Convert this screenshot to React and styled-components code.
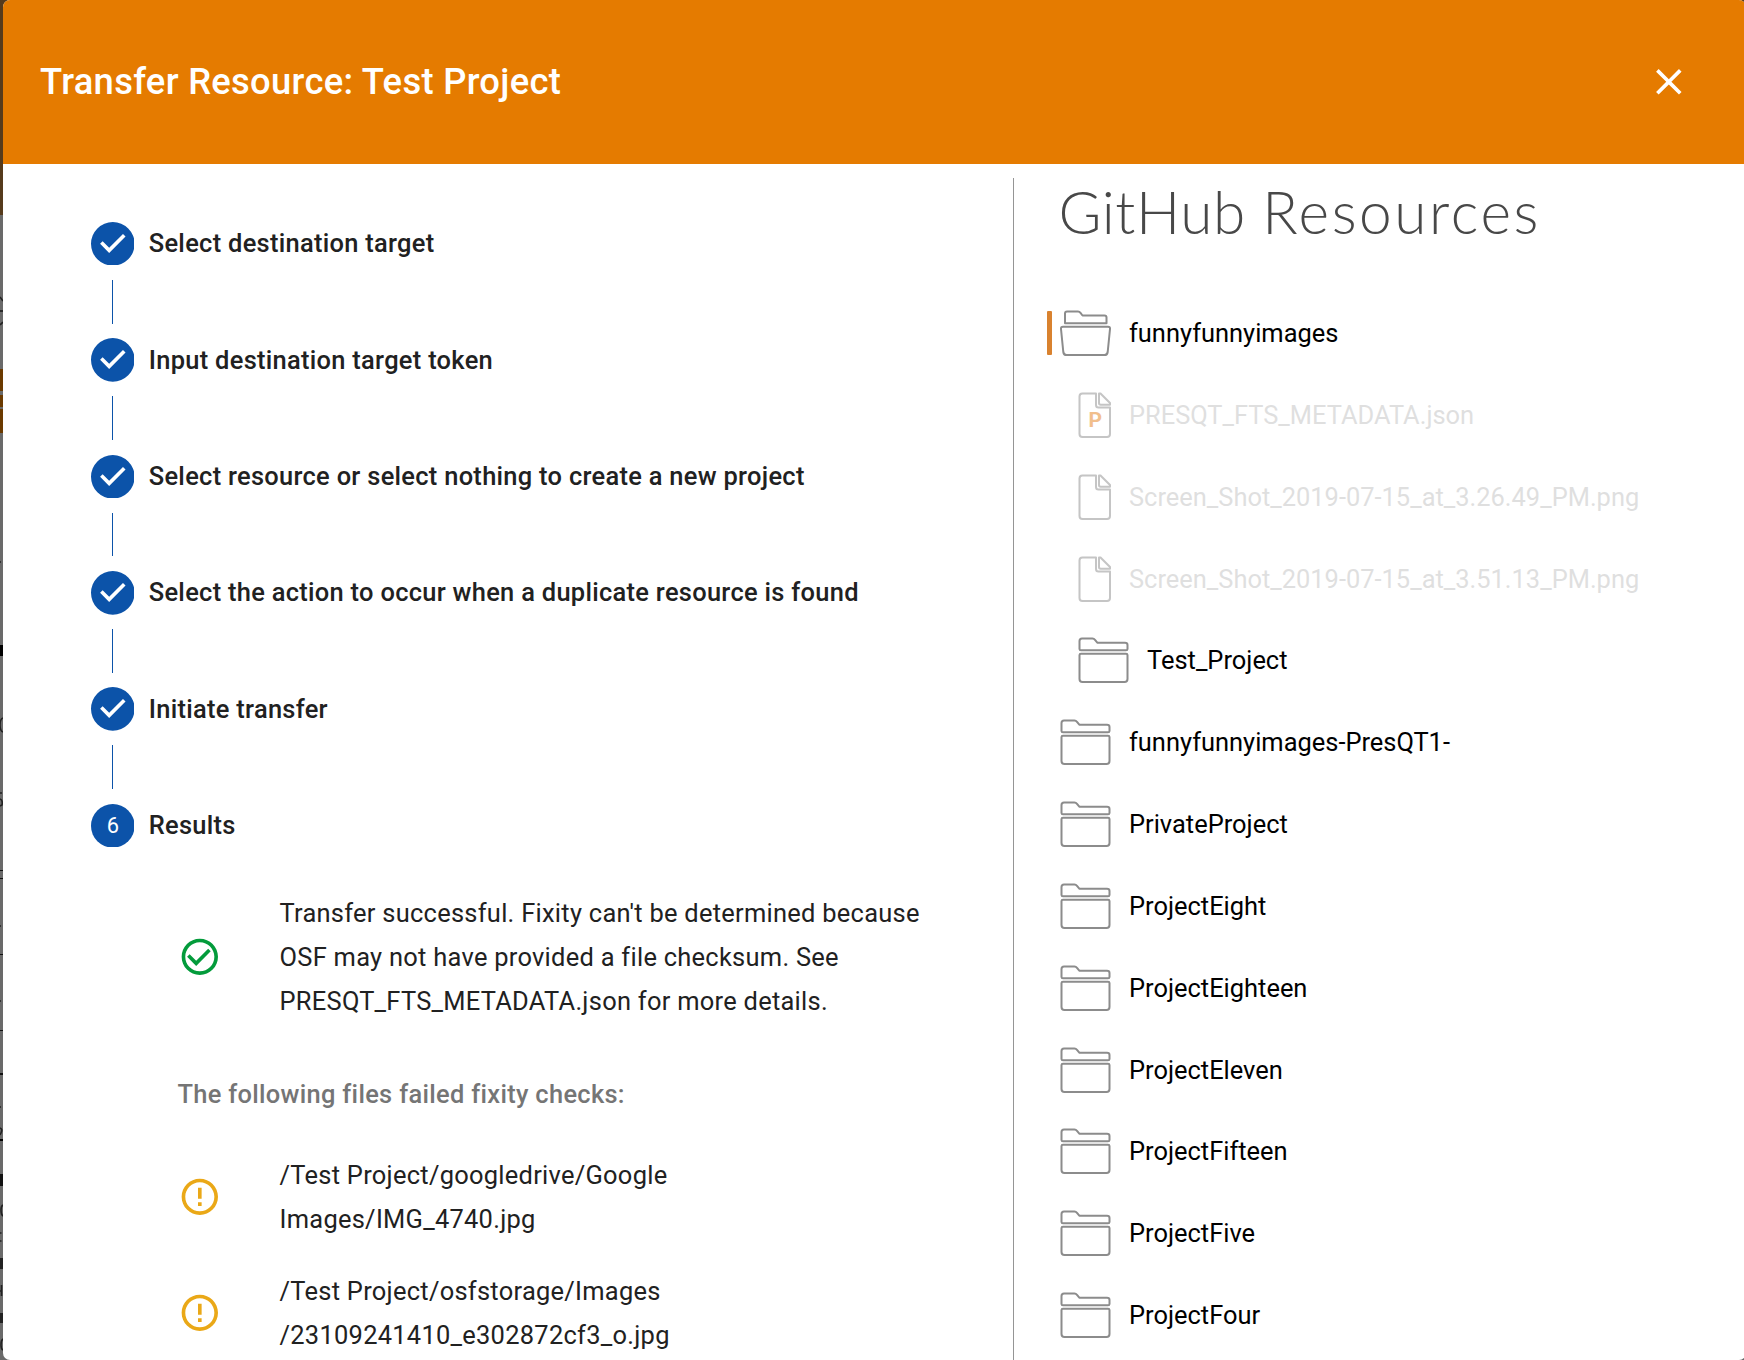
import React from "react";
import styled, { createGlobalStyle } from "styled-components";

const Global = createGlobalStyle`
  * { box-sizing: border-box; }
  html, body, #root { height: 100%; }
  body {
    margin: 0;
    overflow: hidden;
    background: #fff;
    font-family: Roboto, "Liberation Sans", sans-serif;
    -webkit-font-smoothing: antialiased;
  }
`;

const Screen = styled.div`
  display: flex;
  width: 1744px;
  height: 1360px;
  overflow: hidden;
  background: linear-gradient(#563b1c 0 215px, #6a6a6a 215px, #6a6a6a);
`;

const Backdrop = styled.svg`
  flex: none;
  width: 3px;
  height: 1360px;
  display: block;
`;

const Dialog = styled.div`
  flex: none;
  width: 1743px;
  height: 1360px;
  display: flex;
  flex-direction: column;
  border-radius: 7px;
  background: #fff;
  overflow: hidden;
`;

const Header = styled.header`
  flex: none;
  height: 164px;
  display: flex;
  align-items: center;
  justify-content: space-between;
  padding: 0 55.5px 0 37px;
  background: #e57b00;
  color: #fff;
`;

const Title = styled.h1`
  margin: 0;
  font-size: 36.36px;
  line-height: 58px;
  font-weight: 500;
  letter-spacing: 0.0083em;
`;

const CloseButton = styled.button`
  border: 0;
  padding: 0;
  background: none;
  color: #fff;
  display: flex;
`;

const Icon = styled.svg`
  flex: none;
  display: block;
  width: 43.64px;
  height: 43.64px;
  fill: ${(p) => p.$color || "currentColor"};
`;

const Content = styled.div`
  flex: 1;
  min-height: 0;
  display: flex;
`;

const StepperPane = styled.section`
  flex: none;
  width: 1010px;
  padding: 57.85px 0 0 87.6px;
`;

const Step = styled.div`
  display: flex;
  align-items: center;
  gap: 14.55px;
  height: 43.64px;
`;

const StepLabel = styled.span`
  font-size: 25.45px;
  line-height: 36.4px;
  font-weight: 500;
  letter-spacing: 0.0114em;
  color: #212121;
  white-space: nowrap;
`;

const Connector = styled.div`
  width: 1px;
  height: 43.64px;
  margin: 14.55px 0 14.55px 21.4px;
  background: #0c53a9;
`;

const StepNumber = styled.text`
  fill: #fff;
  font-size: 12px;
  text-anchor: middle;
`;

const Results = styled.div`
  padding: 43.6px 0 0 86.8px;
`;

const Result = styled.div`
  display: flex;
  align-items: center;
  gap: 57.5px;
  padding-left: 1px;
  margin-bottom: ${(p) => p.$gap}px;
`;

const ResultText = styled.p`
  margin: 0;
  font-size: 25.45px;
  line-height: 44px;
  letter-spacing: 0.01071em;
  color: #212121;
  white-space: nowrap;
`;

const FailedHeading = styled.h2`
  margin: 0 0 37px;
  font-size: 25.45px;
  line-height: 44px;
  font-weight: 500;
  letter-spacing: 0.012em;
  color: #757575;
`;

const ResourcePane = styled.section`
  flex: 1;
  margin-top: 14px;
  border-left: 1px solid #959595;
`;

const ResourceTitle = styled.h2`
  margin: 0;
  padding: 0 0 0 44.5px;
  height: 114.3px;
  font-family: Lato, sans-serif;
  font-size: 58.5px;
  line-height: 66px;
  font-weight: 300;
  color: #484848;
  white-space: nowrap;
`;

const TitleWord = styled.span`
  letter-spacing: ${(p) => p.$tracking}px;
`;

const ResourceList = styled.ul`
  list-style: none;
  margin: 0;
  padding: 0;
`;

const ResourceRow = styled.li`
  display: flex;
  align-items: center;
  height: 81.82px;
  padding-left: ${(p) => 33 + p.$indent}px;
  color: ${(p) => (p.$disabled ? "#dfdfdf" : "#000")};
  font-size: 25.45px;
`;

const Marker = styled.span`
  flex: none;
  width: 5px;
  height: 44px;
  margin-right: 8px;
  border-radius: 1px;
  background: ${(p) => (p.$on ? "#d9822f" : "transparent")};
`;

const ResourceIcon = styled.svg`
  flex: none;
  display: block;
  width: ${(p) => p.$w}px;
  height: 46px;
  margin-right: 18px;
  opacity: ${(p) => (p.$disabled ? 0.5 : 1)};
  fill: none;
  stroke: #8c8c8c;
  stroke-width: 2;
  stroke-linejoin: round;
`;

const Glyph = styled.text`
  fill: #e5801c;
  stroke: none;
  font-size: 21px;
  font-weight: 700;
`;

const steps = [
  "Select destination target",
  "Input destination target token",
  "Select resource or select nothing to create a new project",
  "Select the action to occur when a duplicate resource is found",
  "Initiate transfer",
];

const resources = [
  { name: "funnyfunnyimages", kind: "open", selected: true },
  { name: "PRESQT_FTS_METADATA.json", kind: "presqt", indent: 18 },
  { name: "Screen_Shot_2019-07-15_at_3.26.49_PM.png", kind: "file", indent: 18 },
  { name: "Screen_Shot_2019-07-15_at_3.51.13_PM.png", kind: "file", indent: 18 },
  { name: "Test_Project", kind: "folder", indent: 18 },
  { name: "funnyfunnyimages-PresQT1-", kind: "folder" },
  { name: "PrivateProject", kind: "folder" },
  { name: "ProjectEight", kind: "folder" },
  { name: "ProjectEighteen", kind: "folder" },
  { name: "ProjectEleven", kind: "folder" },
  { name: "ProjectFifteen", kind: "folder" },
  { name: "ProjectFive", kind: "folder" },
  { name: "ProjectFour", kind: "folder" },
];

const CIRCLE =
  "M12 2C6.48 2 2 6.48 2 12s4.48 10 10 10 10-4.48 10-10S17.52 2 12 2zm0 18c-4.42 0-8-3.58-8-8s3.58-8 8-8 8 3.58 8 8-3.58 8-8 8z";

const StepDone = () => (
  <Icon viewBox="0 0 24 24" $color="#0c53a9">
    <path d="M12 0a12 12 0 1 0 0 24 12 12 0 0 0 0-24zm-2 17l-5-5 1.4-1.4 3.6 3.6 7.6-7.6L19 8l-9 9z" />
  </Icon>
);

const Success = () => (
  <Icon viewBox="0 0 24 24" $color="#039b3b">
    <path d={`M16.59 7.58L10 14.17l-3.59-3.58L5 12l5 5 8-8z${CIRCLE}`} />
  </Icon>
);

const Warning = () => (
  <Icon viewBox="0 0 24 24" $color="#eaa817">
    <path d={`M11 15h2v2h-2zm0-8h2v6h-2z${CIRCLE}`} />
  </Icon>
);

function KindIcon({ kind }) {
  if (kind === "folder") {
    return (
      <ResourceIcon viewBox="0 0 51 46" $w={51}>
        <path d="M1.5 12V4Q1.5 1.5 4 1.5H14.5Q16 1.5 17 2.8L19.3 5.7H47Q49.5 5.7 49.5 8V12Q49.5 13.3 48 13.3H3Q1.5 13.3 1.5 12Z" />
        <path d="M3 16.7H48Q49.5 16.7 49.5 18V42Q49.5 45 46.5 45H4.5Q1.5 45 1.5 42V18Q1.5 16.7 3 16.7Z" />
      </ResourceIcon>
    );
  }
  if (kind === "open") {
    return (
      <ResourceIcon viewBox="0 0 51 46" $w={51}>
        <path d="M5 13.3V3.5Q5 1.5 7 1.5H18Q19.5 1.5 20.5 2.8L22.5 5.5H44.5Q46.5 5.5 46.5 7.5V13.3Z" />
        <path d="M3 16.7H48Q50.2 16.7 50 19L47.7 42Q47.3 45 44.5 45H6.5Q3.7 45 3.3 42L1 19Q.8 16.7 3 16.7Z" />
      </ResourceIcon>
    );
  }
  return (
    <ResourceIcon viewBox="0 0 33 46" $w={33} $disabled>
      <path d="M18 1.5H4.5Q1.5 1.5 1.5 4.5V42Q1.5 45 4.5 45H29Q32 45 32 42V15.5H20.5Q18 15.5 18 13Z" />
      <path d="M21 1.5V11Q21 12.7 22.7 12.7H32V11L22.5 1.5Z" />
      {kind === "presqt" && <Glyph x="10.6" y="34.8">P</Glyph>}
    </ResourceIcon>
  );
}

// Sliver of the dimmed page that stays visible beside the dialog.
const slivers = [
  [310, 2, "#2a2a2a"], [369, 22, "#6b3a00"], [395, 12, "#6b3a00"], [409, 24, "#6b3a00"],
  [645, 11, "#000"], [870, 1, "#111"], [878, 1, "#111"], [954, 1, "#111"],
  [1030, 1, "#111"], [1073, 2, "#111"], [1139, 2, "#000"], [1174, 12, "#111"],
  [1258, 11, "#222"], [1313, 10, "#222"],
];

function PageSliver() {
  return (
    <Backdrop viewBox="0 0 3 1360">
      {slivers.map(([y, h, c]) => (
        <rect key={y} x="0" y={y} width="3" height={h} fill={c} />
      ))}
      <g fill="none" stroke="#222" strokeWidth="1.6">
        <path d="M0 297L3 301M3 322L0 325" />
        <path d="M3 718Q0 719 0 725Q0 731 3 732" />
        <path d="M0 793H2M0 799Q3 800 2 805L0 806" />
        <path d="M0 1128Q3 1129 1 1133L0 1135" />
        <path d="M3 1205Q1 1206 1 1210Q1 1215 3 1216" />
        <path d="M0 1233H1.5M0 1241H1.5M0 1291H1M1.5 1285V1296M0 562H1M0 926H1M0 1001H1M0 1107H1" />
        <path d="M3 1339Q1 1340 1 1345Q1 1349 3 1350" />
      </g>
    </Backdrop>
  );
}

export default function App() {
  return (
    <>
      <Global />
      <Screen>
        <PageSliver />
        <Dialog role="dialog">
          <Header>
            <Title>Transfer Resource: Test Project</Title>
            <CloseButton aria-label="Close">
              <Icon viewBox="0 0 24 24">
                <path d="M19 6.41L17.59 5 12 10.59 6.41 5 5 6.41 10.59 12 5 17.59 6.41 19 12 13.41 17.59 19 19 17.59 13.41 12z" />
              </Icon>
            </CloseButton>
          </Header>
          <Content>
            <StepperPane>
              {steps.map((label) => (
                <React.Fragment key={label}>
                  <Step>
                    <StepDone />
                    <StepLabel>{label}</StepLabel>
                  </Step>
                  <Connector />
                </React.Fragment>
              ))}
              <Step>
                <Icon viewBox="0 0 24 24" $color="#0c53a9">
                  <circle cx="12" cy="12" r="12" />
                  <StepNumber x="12" y="16">6</StepNumber>
                </Icon>
                <StepLabel>Results</StepLabel>
              </Step>
              <Results>
                <Result $gap={49}>
                  <Success />
                  <ResultText>
                    Transfer successful. Fixity can't be determined because
                    <br />
                    OSF may not have provided a file checksum. See
                    <br />
                    PRESQT_FTS_METADATA.json for more details.
                  </ResultText>
                </Result>
                <FailedHeading>The following files failed fixity checks:</FailedHeading>
                <Result $gap={28.5}>
                  <Warning />
                  <ResultText>
                    /Test Project/googledrive/Google
                    <br />
                    Images/IMG_4740.jpg
                  </ResultText>
                </Result>
                <Result $gap={0}>
                  <Warning />
                  <ResultText>
                    /Test Project/osfstorage/Images
                    <br />
                    /23109241410_e302872cf3_o.jpg
                  </ResultText>
                </Result>
              </Results>
            </StepperPane>
            <ResourcePane>
              <ResourceTitle>
                <TitleWord $tracking={0.6}>GitHub </TitleWord>
                <TitleWord $tracking={2.6}>Resources</TitleWord>
              </ResourceTitle>
              <ResourceList>
                {resources.map(({ name, kind, indent = 0, selected }) => (
                  <ResourceRow
                    key={name}
                    $indent={indent}
                    $disabled={kind === "file" || kind === "presqt"}
                  >
                    <Marker $on={selected} />
                    <KindIcon kind={kind} />
                    {name}
                  </ResourceRow>
                ))}
              </ResourceList>
            </ResourcePane>
          </Content>
        </Dialog>
      </Screen>
    </>
  );
}
